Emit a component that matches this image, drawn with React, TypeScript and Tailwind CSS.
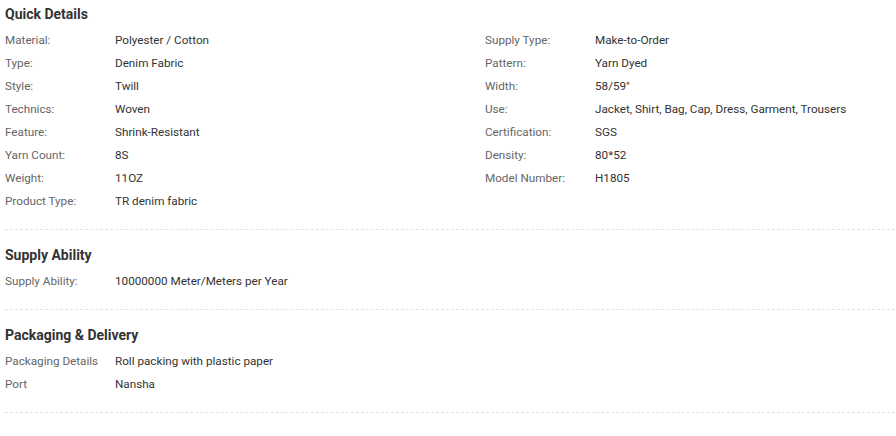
const quickLeft = [
  ["Material:", "Polyester / Cotton"],
  ["Type:", "Denim Fabric"],
  ["Style:", "Twill"],
  ["Technics:", "Woven"],
  ["Feature:", "Shrink-Resistant"],
  ["Yarn Count:", "8S"],
  ["Weight:", "11OZ"],
  ["Product Type:", "TR denim fabric"],
];

const quickRight = [
  ["Supply Type:", "Make-to-Order"],
  ["Pattern:", "Yarn Dyed"],
  ["Width:", "58/59\""],
  ["Use:", "Jacket, Shirt, Bag, Cap, Dress, Garment, Trousers"],
  ["Certification:", "SGS"],
  ["Density:", "80*52"],
  ["Model Number:", "H1805"],
];

function Row({ label, value }: { label: string; value: string }) {
  return (
    <div className="flex h-[23px] items-center text-[11.7px] leading-[23px]">
      <span className="w-[110px] shrink-0 text-[#666]">{label}</span>
      <span className="text-[#333]">{value}</span>
    </div>
  );
}

function Section({
  title,
  first,
  children,
}: {
  title: string;
  first?: boolean;
  children: React.ReactNode;
}) {
  return (
    <section
      className={`border-b border-dashed border-[#e3e3e3] pb-[16px] ${first ? "pt-[4px]" : "pt-[15px]"}`}
    >
      <h3 className="mb-[5px] h-[20px] text-[14px] font-bold leading-[20px] text-[#333]">
        {title}
      </h3>
      {children}
    </section>
  );
}

export default function App() {
  return (
    <div
      className="h-[436px] w-[896px] bg-white pl-[5px] pr-[1px]"
      style={{ fontFamily: "Roboto, 'Liberation Sans', sans-serif" }}
    >
      <Section title="Quick Details" first>
        <div className="grid grid-cols-[480px_1fr]">
          <div>
            {quickLeft.map(([l, v]) => (
              <Row key={l} label={l} value={v} />
            ))}
          </div>
          <div>
            {quickRight.map(([l, v]) => (
              <Row key={l} label={l} value={v} />
            ))}
          </div>
        </div>
      </Section>

      <Section title="Supply Ability">
        <Row label="Supply Ability:" value="10000000 Meter/Meters per Year" />
      </Section>

      <Section title="Packaging & Delivery">
        <Row label="Packaging Details" value="Roll packing with plastic paper" />
        <Row label="Port" value="Nansha" />
      </Section>
    </div>
  );
}
